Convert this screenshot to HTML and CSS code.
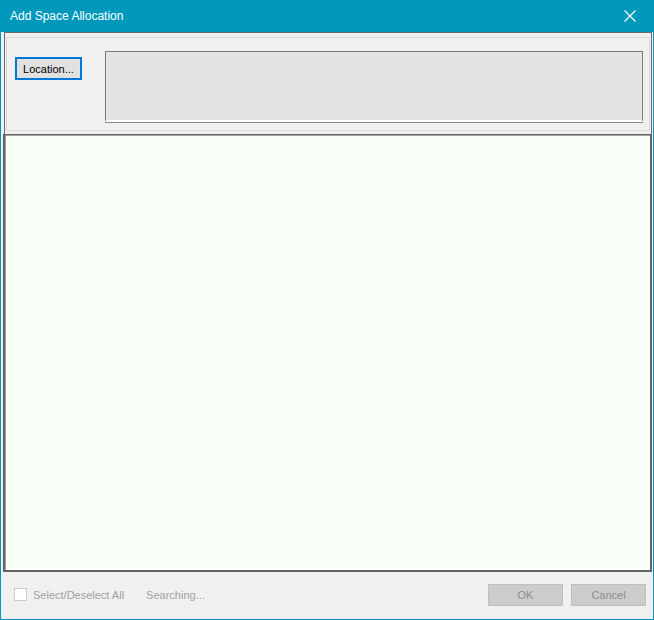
FILE: index.html
```html
<!DOCTYPE html>
<html>
<head>
<meta charset="utf-8">
<title>Add Space Allocation</title>
<link rel="stylesheet" href="styles.css">
</head>
<body>
<div class="window">
  <div class="titlebar">
    <span class="title">Add Space Allocation</span>
    <svg class="close" width="12" height="12" viewBox="0 0 12 12"><path d="M0.5 0.5 L11.5 11.5 M11.5 0.5 L0.5 11.5" stroke="#ffffff" stroke-width="1.2" fill="none"/></svg>
  </div>
  <div class="client">
    <div class="toppanel">
      <div class="group">
        <button class="btn-location">Location...</button>
        <div class="locationbox"></div>
      </div>
    </div>
    <div class="list"></div>
    <div class="footer">
      <label class="check"><span class="box"></span><span class="lbl">Select/Deselect All</span></label>
      <span class="status">Searching...</span>
      <span class="spacer"></span>
      <button class="btn-dis">OK</button>
      <button class="btn-dis">Cancel</button>
    </div>
  </div>
</div>
</body>
</html>
```

FILE: styles.css
```css
* { box-sizing: border-box; }
html, body { margin: 0; padding: 0; }
body {
  width: 654px;
  height: 620px;
  font-family: "Liberation Sans", Arial, sans-serif;
  font-size: 11px;
}
.window {
  width: 654px;
  height: 620px;
  background: #0099bc;
  padding: 0 1px 1px 1px;
  display: flex;
  flex-direction: column;
}
.titlebar {
  height: 32px;
  display: flex;
  align-items: center;
  padding: 0 10px 0 9px;
  color: #ffffff;
}
.title {
  flex: 1;
  font-size: 12px;
}
.close { margin-right: 7px; }
.client {
  flex: 1;
  background: #f0f0f0;
  display: flex;
  flex-direction: column;
  padding: 0 1px 0 2px;
}
.toppanel {
  height: 102px;
  margin-left: 1px;
  border: 1px solid #6b6b6b;
  border-bottom: none;
  padding: 4px 1px 3px 1px;
}
.group {
  height: 100%;
  border: 1px solid #dadada;
  display: flex;
  align-items: flex-start;
  padding: 13px 6px 6px 8px;
}
.btn-location {
  margin-top: 6px;
  width: 67px;
  height: 23px;
  border: 2px solid #0078d7;
  background: #e1e1e1;
  font-family: inherit;
  font-size: 11px;
  color: #000;
  padding: 0;
}
.locationbox {
  margin-left: 23px;
  flex: 1;
  height: 71px;
  background: #e3e3e3;
  border-top: 1px solid #7a7a7a;
  border-left: 1px solid #7a7a7a;
  border-right: 1px solid #7a7a7a;
  border-bottom: 2px solid #ffffff;
  box-shadow: 0 1px 0 #8a8a8a;
}
.list {
  height: 438px;
  background: #f7fff7;
  border: 2px solid #646464;
  border-top: 1px solid #646464;
  box-shadow: inset 1px 1px 0 #a0a0a0;
}
.footer {
  flex: 1;
  display: flex;
  align-items: center;
  padding: 0 6px 2px 11px;
  color: #a0a0a0;
}
.check { display: flex; align-items: center; }
.box {
  width: 13px;
  height: 13px;
  border: 1px solid #cccccc;
  background: #ffffff;
}
.lbl { margin-left: 6px; }
.status { margin-left: 22px; }
.spacer { flex: 1; }
.btn-dis {
  width: 75px;
  height: 22px;
  margin-left: 8px;
  background: #cccccc;
  border: 1px solid #bfbfbf;
  color: #8c8c8c;
  font-family: inherit;
  font-size: 11px;
  padding: 0;
}
```
